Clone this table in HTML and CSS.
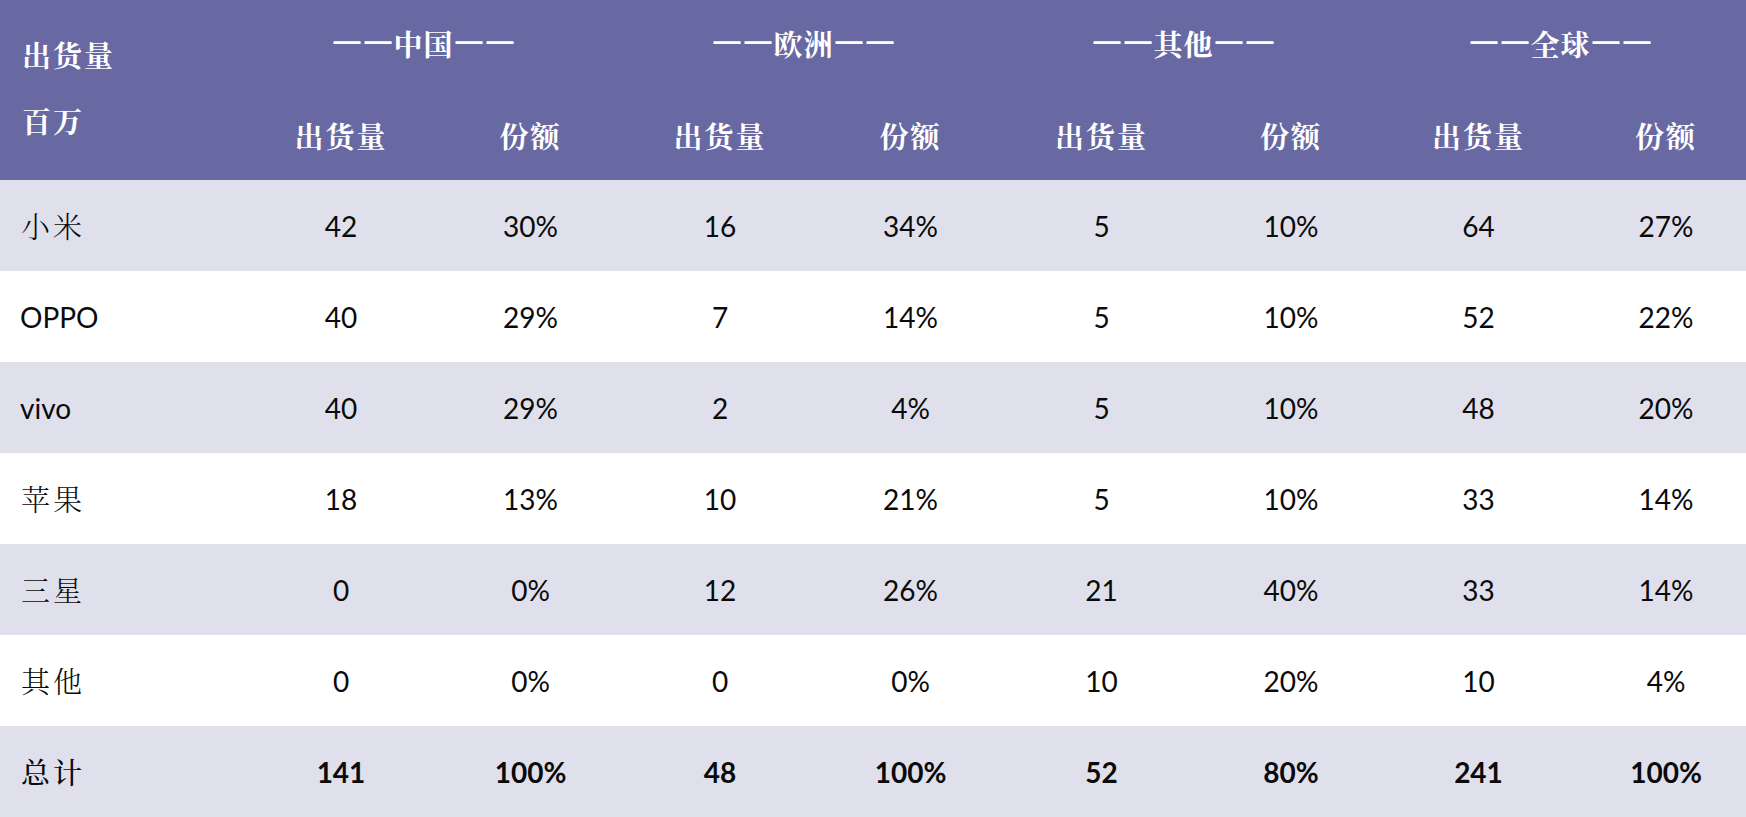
FILE: index.html
```html
<!DOCTYPE html>
<html lang="zh-CN">
<head>
<meta charset="utf-8">
<title>出货量</title>
<link rel="stylesheet" href="styles.css">
</head>
<body>
<div class="sheet">
  <div class="head">
    <div class="corner"><span>出货量</span><span>百万</span></div>
    <div class="group"><span class="dash">—</span><span class="dash">—</span>中国<span class="dash">—</span><span class="dash">—</span></div>
    <div class="group"><span class="dash">—</span><span class="dash">—</span>欧洲<span class="dash">—</span><span class="dash">—</span></div>
    <div class="group"><span class="dash">—</span><span class="dash">—</span>其他<span class="dash">—</span><span class="dash">—</span></div>
    <div class="group"><span class="dash">—</span><span class="dash">—</span>全球<span class="dash">—</span><span class="dash">—</span></div>
    <div class="sub">出货量</div><div class="sub">份额</div>
    <div class="sub">出货量</div><div class="sub">份额</div>
    <div class="sub">出货量</div><div class="sub">份额</div>
    <div class="sub">出货量</div><div class="sub">份额</div>
  </div>
  <div class="row shade">
    <div class="name cjk">小米</div>
    <div>42</div><div>30%</div><div>16</div><div>34%</div><div>5</div><div>10%</div><div>64</div><div>27%</div>
  </div>
  <div class="row">
    <div class="name">OPPO</div>
    <div>40</div><div>29%</div><div>7</div><div>14%</div><div>5</div><div>10%</div><div>52</div><div>22%</div>
  </div>
  <div class="row shade">
    <div class="name">vivo</div>
    <div>40</div><div>29%</div><div>2</div><div>4%</div><div>5</div><div>10%</div><div>48</div><div>20%</div>
  </div>
  <div class="row">
    <div class="name cjk">苹果</div>
    <div>18</div><div>13%</div><div>10</div><div>21%</div><div>5</div><div>10%</div><div>33</div><div>14%</div>
  </div>
  <div class="row shade">
    <div class="name cjk">三星</div>
    <div>0</div><div>0%</div><div>12</div><div>26%</div><div>21</div><div>40%</div><div>33</div><div>14%</div>
  </div>
  <div class="row">
    <div class="name cjk">其他</div>
    <div>0</div><div>0%</div><div>0</div><div>0%</div><div>10</div><div>20%</div><div>10</div><div>4%</div>
  </div>
  <div class="row shade total">
    <div class="name cjk">总计</div>
    <div>141</div><div>100%</div><div>48</div><div>100%</div><div>52</div><div>80%</div><div>241</div><div>100%</div>
  </div>
</div>
</body>
</html>
```
FILE: styles.css
```css
html, body {
  margin: 0;
  padding: 0;
  overflow: hidden;
  background: #ffffff;
}

.sheet {
  width: 1760px;
  --cols: 246px 190px 189px 190px 191px 191px 188px 187px 188px;
}

.head {
  display: grid;
  grid-template-columns: var(--cols);
  grid-template-rows: 86px 94px;
  background: #6869a3;
  color: #ffffff;
  font-family: "Noto Serif CJK SC", "Noto Sans CJK SC", sans-serif;
  font-weight: 700;
  font-size: 29px;
}

.corner {
  grid-row: 1 / span 2;
  display: flex;
  flex-direction: column;
  padding: 22px 0 0 22px;
  line-height: 66px;
  letter-spacing: 2px;
}

.group {
  grid-column: span 2;
  display: flex;
  align-items: center;
  justify-content: center;
  padding-right: 24px;
  letter-spacing: 1px;
}

.dash {
  display: inline-block;
  font-family: "Liberation Sans", sans-serif;
  font-weight: 700;
  font-size: 27px;
  letter-spacing: 0;
  margin: 0 2px;
  position: relative;
  top: -2px;
}

.sub {
  display: flex;
  align-items: center;
  justify-content: center;
  padding-top: 4px;
  letter-spacing: 2px;
}

.row {
  display: grid;
  grid-template-columns: var(--cols);
  height: 91px;
  background: #ffffff;
  color: #0a0a0a;
  font-family: Lato, "Noto Serif CJK SC", "Noto Sans CJK SC", sans-serif;
  font-size: 28px;
}

.row.shade {
  background: #dfe0ec;
}

.row > div {
  display: flex;
  align-items: center;
  justify-content: center;
}

.row > .name {
  justify-content: flex-start;
  padding-left: 20px;
}

.row > .cjk {
  font-family: "Noto Serif CJK SC", "Noto Sans CJK SC", sans-serif;
  font-weight: 300;
  font-size: 29px;
  letter-spacing: 3px;
  padding-left: 21px;
}

.row.total > div {
  font-weight: 700;
}

.row.total > .cjk {
  font-weight: 500;
}
```
